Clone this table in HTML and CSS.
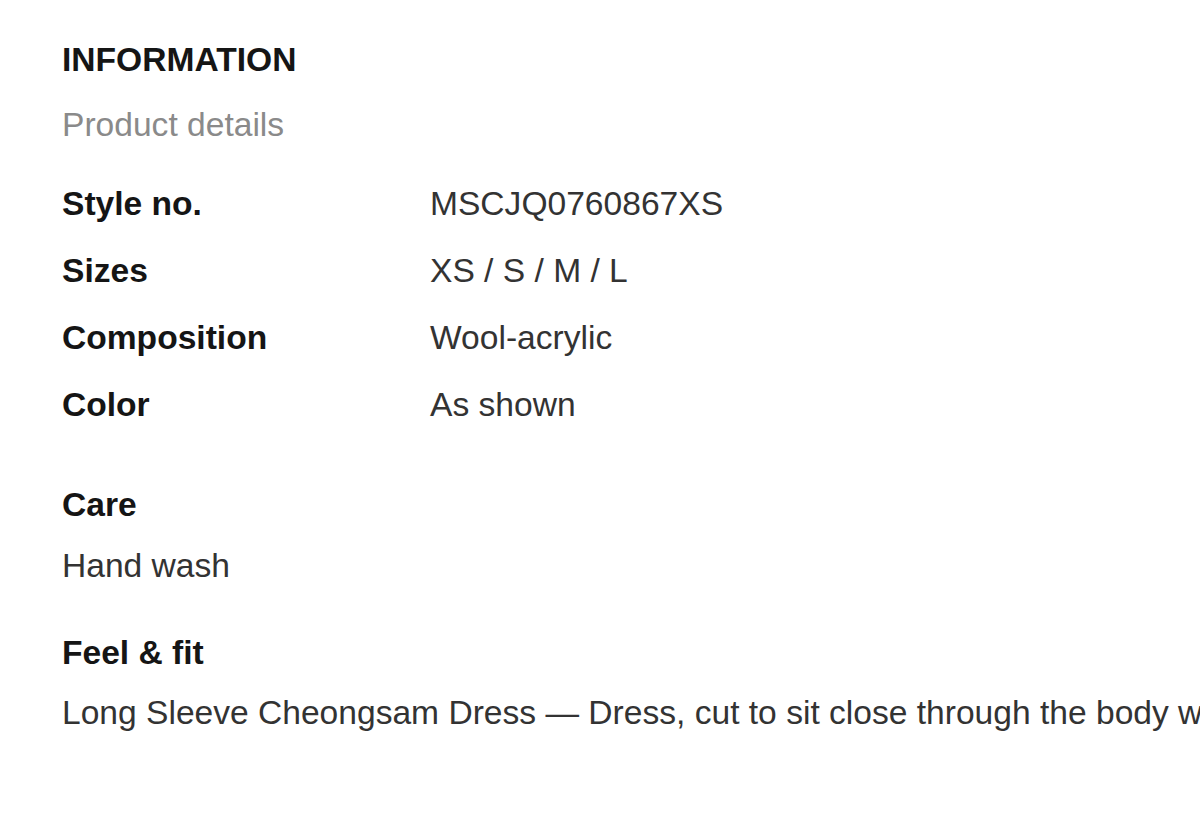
FILE: index.html
```html
<!DOCTYPE html>
<html lang="en">
<head>
    <meta charset="UTF-8">
    <meta name="viewport" content="width=device-width, initial-scale=1.0">
    <title>Information - Product details</title>
    <link rel="stylesheet" href="styles.css">
</head>
<body>
    <main class="info">
        <h1 class="info-title">INFORMATION</h1>
        <p class="info-subtitle">Product details</p>

        <dl class="specs">
            <div class="spec-row">
                <dt>Style no.</dt>
                <dd>MSCJQ0760867XS</dd>
            </div>
            <div class="spec-row">
                <dt>Sizes</dt>
                <dd>XS / S / M / L</dd>
            </div>
            <div class="spec-row">
                <dt>Composition</dt>
                <dd>Wool-acrylic</dd>
            </div>
            <div class="spec-row">
                <dt>Color</dt>
                <dd>As shown</dd>
            </div>
        </dl>

        <section class="block care">
            <h2>Care</h2>
            <p>Hand wash</p>
        </section>

        <section class="block fit">
            <h2>Feel &amp; fit</h2>
            <p>Long Sleeve Cheongsam Dress — Dress, cut to sit close through the body with a high mandarin collar and side slits.</p>
        </section>
    </main>
</body>
</html>
```

FILE: styles.css
```css
html, body {
    margin: 0;
    padding: 0;
    background: #fff;
    overflow: hidden;
}

body {
    font-family: "Liberation Sans", Arial, sans-serif;
    font-size: 33.6px;
    line-height: 1.2;
    color: #333;
}

.info {
    padding: 40px 0 0 62px;
    white-space: nowrap;
}

.info-title {
    margin: 0;
    font-size: 1em;
    font-weight: 700;
    color: #151515;
}

.info-subtitle {
    margin: 25px 0 0;
    color: #8a8a8a;
}

.specs {
    margin: 38px 0 0;
    display: flex;
    flex-direction: column;
    gap: 26.7px;
}

.spec-row {
    display: grid;
    grid-template-columns: 368px 1fr;
}

.spec-row dt {
    font-weight: 700;
    color: #151515;
}

.spec-row dd {
    margin: 0;
}

.block h2 {
    margin: 0;
    font-size: 1em;
    font-weight: 700;
    color: #151515;
}

.block p {
    margin: 0;
}

.care {
    margin-top: 60px;
}

.care p {
    margin-top: 21px;
}

.fit {
    margin-top: 46px;
}

.fit p {
    margin-top: 20px;
}
```
